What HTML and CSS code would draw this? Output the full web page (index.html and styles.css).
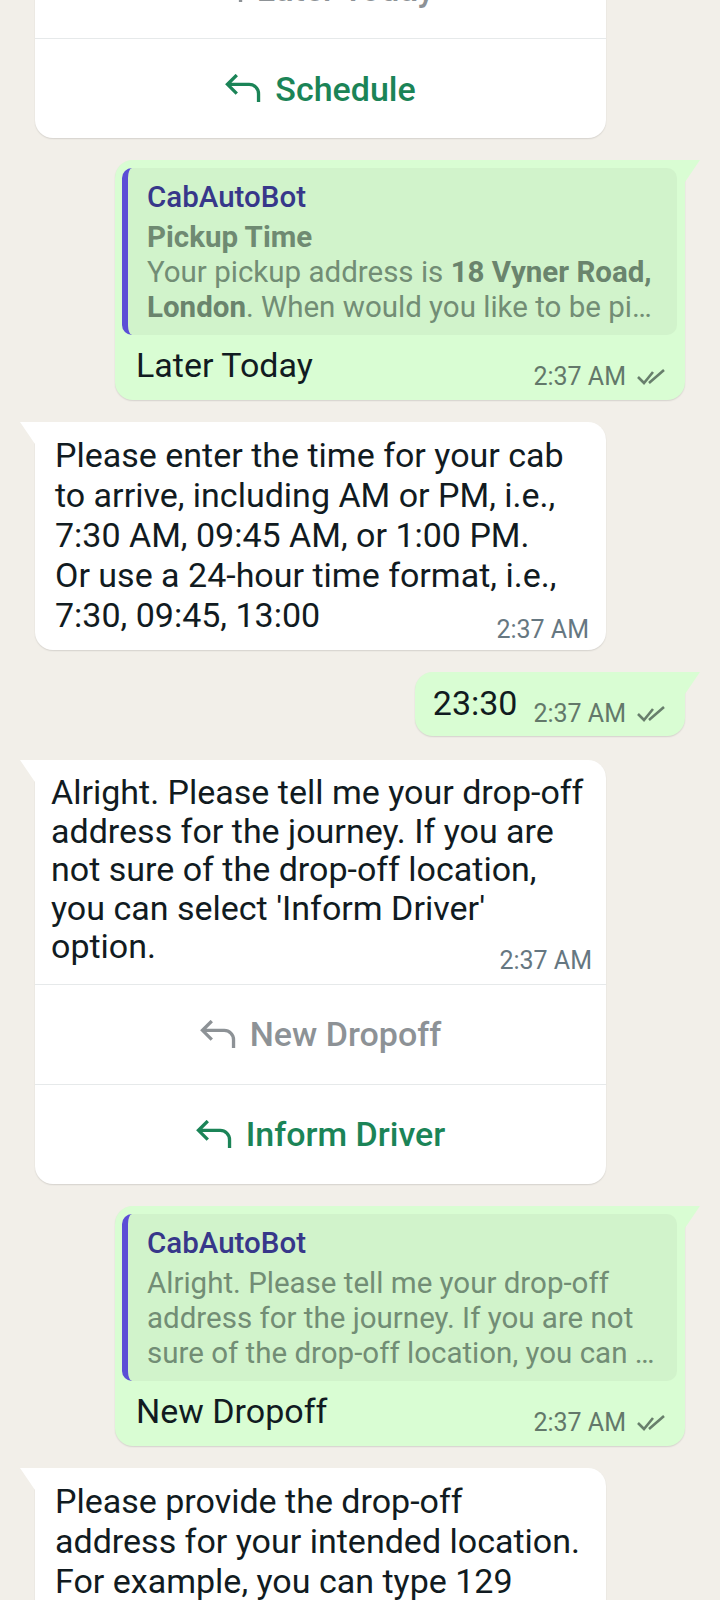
FILE: index.html
```html
<!DOCTYPE html>
<html lang="en">
<head>
  <meta charset="UTF-8">
  <meta name="viewport" content="width=device-width, initial-scale=1.0">
  <title>CabAutoBot chat</title>
  <link rel="stylesheet" href="styles.css">
</head>
<body>

  <div class="chat">

    <!-- template message, scrolled up -->
    <div class="row in">
      <div class="bubble">
        <div class="actions">
          <div class="action used">
            <svg class="reply-ico" viewBox="0 0 34 28"><path d="M11 1 L2 10 L11 19 M2 10 H23 a9 9 0 0 1 9 9 V27"/></svg>
            <span>Later Today</span>
          </div>
          <div class="action">
            <svg class="reply-ico" viewBox="0 0 34 28"><path d="M11 1 L2 10 L11 19 M2 10 H23 a9 9 0 0 1 9 9 V27"/></svg>
            <span>Schedule</span>
          </div>
        </div>
      </div>
    </div>

    <div class="row out">
      <div class="bubble tail">
        <div class="quote">
          <div class="quote-name">CabAutoBot</div>
          <div class="quote-title">Pickup Time</div>
          <div class="quote-text">Your pickup address is <b>18 Vyner Road,</b><br><b>London</b>. When would you like to be pi…</div>
        </div>
        <div class="reply-text">Later Today</div>
        <div class="meta">
          <span class="time">2:37 AM</span>
          <svg class="ticks" viewBox="0 0 30 16"><path d="M1 8 L7 14 L16 3 M12 14 L27 1"/></svg>
        </div>
      </div>
    </div>

    <div class="row in">
      <div class="bubble tail">
        <div class="text">Please enter the time for your cab<br>to arrive, including AM or PM, i.e.,<br>7:30 AM, 09:45 AM, or 1:00 PM.<br>Or use a 24-hour time format, i.e.,<br>7:30, 09:45, 13:00</div>
        <div class="meta">
          <span class="time">2:37 AM</span>
        </div>
      </div>
    </div>

    <div class="row out">
      <div class="bubble tail short">
        <div class="text">23:30</div>
        <div class="meta">
          <span class="time">2:37 AM</span>
          <svg class="ticks" viewBox="0 0 30 16"><path d="M1 8 L7 14 L16 3 M12 14 L27 1"/></svg>
        </div>
      </div>
    </div>

    <div class="row in">
      <div class="bubble tail template">
        <div class="text">Alright. Please tell me your drop-off<br>address for the journey. If you are<br>not sure of the drop-off location,<br>you can select 'Inform Driver'<br>option.</div>
        <div class="meta">
          <span class="time">2:37 AM</span>
        </div>
        <div class="actions">
          <div class="action used">
            <svg class="reply-ico" viewBox="0 0 34 28"><path d="M11 1 L2 10 L11 19 M2 10 H23 a9 9 0 0 1 9 9 V27"/></svg>
            <span>New Dropoff</span>
          </div>
          <div class="action">
            <svg class="reply-ico" viewBox="0 0 34 28"><path d="M11 1 L2 10 L11 19 M2 10 H23 a9 9 0 0 1 9 9 V27"/></svg>
            <span>Inform Driver</span>
          </div>
        </div>
      </div>
    </div>

    <div class="row out">
      <div class="bubble tail">
        <div class="quote">
          <div class="quote-name">CabAutoBot</div>
          <div class="quote-text">Alright. Please tell me your drop-off<br>address for the journey. If you are not<br>sure of the drop-off location, you can …</div>
        </div>
        <div class="reply-text">New Dropoff</div>
        <div class="meta">
          <span class="time">2:37 AM</span>
          <svg class="ticks" viewBox="0 0 30 16"><path d="M1 8 L7 14 L16 3 M12 14 L27 1"/></svg>
        </div>
      </div>
    </div>

    <div class="row in">
      <div class="bubble tail">
        <div class="text">Please provide the drop-off<br>address for your intended location.<br>For example, you can type 129<br>Vyner Road, London.</div>
        <div class="meta">
          <span class="time">2:37 AM</span>
        </div>
      </div>
    </div>

  </div>

</body>
</html>
```

FILE: styles.css
```css
body {
  margin: 0;
  background-color: #f2efe9;
  font-family: Roboto, "Noto Sans", Arial, sans-serif;
  color: #111b21;
  overflow: hidden;
}

.chat {
  display: flex;
  flex-direction: column;
  gap: 22px;
  margin-top: -61px; /* first button is scrolled off */
}

.row {
  display: flex;
  padding: 0 35px;
}

.row.out {
  justify-content: flex-end;
}

.bubble {
  position: relative;
  background-color: #fff;
  border-radius: 18px;
  box-shadow: 0 1px 1.5px rgba(0, 0, 0, 0.12);
}

.in .bubble {
  width: 571px;
}

.out .bubble {
  width: 570px;
  background-color: #d9fdd3;
  padding: 8px 8px 8px 7px;
  box-sizing: border-box;
}

/* little corner tails */
.in .bubble.tail {
  border-top-left-radius: 0;
}

.in .bubble.tail:before {
  content: "";
  position: absolute;
  top: 0;
  left: -15px;
  border-top: 22px solid #fff;
  border-left: 15px solid transparent;
}

.out .bubble.tail {
  border-top-right-radius: 0;
}

.out .bubble.tail:before {
  content: "";
  position: absolute;
  top: 0;
  right: -15px;
  border-top: 22px solid #d9fdd3;
  border-right: 15px solid transparent;
}

.text {
  font-size: 34px;
  line-height: 40px;
  white-space: nowrap;
}

.in .text {
  padding: 13px 17px 0 20px;
}

.meta {
  display: flex;
  justify-content: flex-end;
  align-items: center;
  gap: 11px;
  margin-top: -20px;
  line-height: 30px;
}

.in .meta {
  padding: 0 17px 5px 0;
}

.time {
  font-size: 25px;
  color: #667781;
}

.out .time {
  color: #63786a;
}

.ticks {
  width: 30px;
  height: 16px;
  fill: none;
  stroke: #687f6c;
  stroke-width: 2.6;
}

/* template message with buttons */
.template {
  margin-top: 2px;
}

.template .text {
  padding: 13px 14px 0 16px;
  line-height: 38.5px;
}

.template .meta {
  padding: 0 14px 8px 0;
}

.actions {
  display: flex;
  flex-direction: column;
}

.action {
  height: 99px;
  display: flex;
  align-items: center;
  justify-content: center;
  gap: 14px;
  border-top: 1px solid #e6e9ea;
  color: #1b8457;
  font-size: 34px;
  font-weight: 500;
}

.action:first-child {
  border-top: none;
}

.template .action:first-child {
  border-top: 1px solid #e6e9ea;
}

.action.used {
  color: #8d9296;
}

.reply-ico {
  width: 36px;
  height: 29px;
  fill: none;
  stroke: currentColor;
  stroke-width: 3.2;
}

/* quoted reply inside an outgoing bubble */
.quote {
  background-color: #d1f3cb;
  border-left: 6px solid #5b4ed6;
  border-radius: 10px;
  padding: 11px 12px 10px 19px;
}

.quote-name {
  font-size: 29.5px;
  font-weight: 500;
  line-height: 36px;
  color: #37378a;
  margin-bottom: 5px;
}

.quote-title {
  font-size: 29.5px;
  font-weight: 700;
  line-height: 35px;
  color: #6f8a72;
}

.quote-text {
  font-size: 29.5px;
  line-height: 35px;
  color: #728d75;
  white-space: nowrap;
}

.quote-text b {
  color: #6a846d;
}

.reply-text {
  font-size: 34px;
  line-height: 40px;
  margin: 10px 0 0 14px;
}

.out .meta {
  margin-top: -23px;
  padding-right: 10px;
}

/* short outgoing message: text and time side by side */
.out .bubble.short {
  width: auto;
  display: flex;
  align-items: flex-end;
  gap: 16px;
  padding: 11px 18px 7px 18px;
}

.short .text {
  margin-bottom: 6px;
}

.short .meta {
  margin-top: 0;
  padding-right: 0;
}
```
